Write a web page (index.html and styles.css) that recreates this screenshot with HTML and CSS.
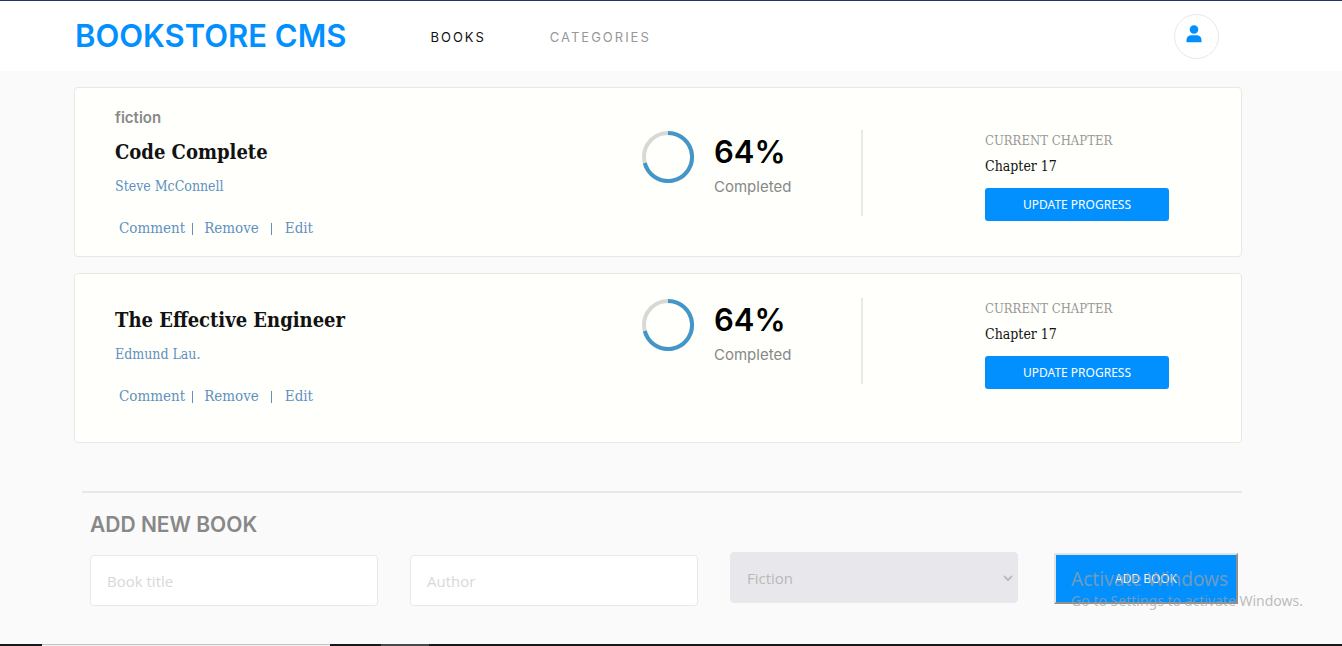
FILE: index.html
```html
<!DOCTYPE html>
<html lang="en">
<head>
  <meta charset="utf-8">
  <meta name="viewport" content="width=device-width, initial-scale=1">
  <title>Bookstore CMS</title>
  <link rel="stylesheet" href="styles.css">
</head>
<body class="page">
  <header class="header">
    <h1 class="brand">BOOKSTORE CMS</h1>
    <nav class="nav">
      <a class="nav-link nav-link-active" href="#books">BOOKS</a>
      <a class="nav-link" href="#categories">CATEGORIES</a>
    </nav>
    <button class="profile" type="button" aria-label="Profile">
      <svg class="profile-icon" viewBox="0 0 16 18" aria-hidden="true">
        <circle cx="8" cy="4.5" r="4.3"/>
        <path d="M0.5 17.3v-2.3a4.8 4.8 0 0 1 4.8-4.8h5.4a4.8 4.8 0 0 1 4.8 4.8v2.3z"/>
      </svg>
    </button>
  </header>

  <main class="main" id="books">
    <article class="card">
      <p class="category">fiction</p>
      <div class="card-row">
        <section class="book">
          <h2 class="title">Code Complete</h2>
          <a class="author" href="#author">Steve McConnell</a>
          <div class="actions">
            <button class="action action-comment" type="button">Comment</button>
            <button class="action action-remove" type="button">Remove</button>
            <button class="action action-edit" type="button">Edit</button>
          </div>
        </section>
        <section class="progress">
          <svg class="ring" viewBox="0 0 52 52" aria-hidden="true">
            <circle class="ring-track" cx="26" cy="26" r="24"/>
            <path class="ring-value" d="M26 2A24 24 0 1 1 2.8 32"/>
          </svg>
          <div class="progress-text">
            <p class="percent">64%</p>
            <p class="completed">Completed</p>
          </div>
        </section>
        <section class="chapter">
          <p class="chapter-label">CURRENT CHAPTER</p>
          <p class="chapter-name">Chapter 17</p>
          <button class="update" type="button">UPDATE PROGRESS</button>
        </section>
      </div>
    </article>

    <article class="card">
      <div class="card-row">
        <section class="book">
          <h2 class="title">The Effective Engineer</h2>
          <a class="author" href="#author">Edmund Lau.</a>
          <div class="actions">
            <button class="action action-comment" type="button">Comment</button>
            <button class="action action-remove" type="button">Remove</button>
            <button class="action action-edit" type="button">Edit</button>
          </div>
        </section>
        <section class="progress">
          <svg class="ring" viewBox="0 0 52 52" aria-hidden="true">
            <circle class="ring-track" cx="26" cy="26" r="24"/>
            <path class="ring-value" d="M26 2A24 24 0 1 1 2.8 32"/>
          </svg>
          <div class="progress-text">
            <p class="percent">64%</p>
            <p class="completed">Completed</p>
          </div>
        </section>
        <section class="chapter">
          <p class="chapter-label">CURRENT CHAPTER</p>
          <p class="chapter-name">Chapter 17</p>
          <button class="update" type="button">UPDATE PROGRESS</button>
        </section>
      </div>
    </article>

    <section class="add">
      <h2 class="add-title">ADD NEW BOOK</h2>
      <form class="form">
        <input class="field" type="text" placeholder="Book title" aria-label="Book title">
        <input class="field" type="text" placeholder="Author" aria-label="Author">
        <div class="select-wrap">
          <select class="select" aria-label="Category">
            <option>Fiction</option>
          </select>
          <svg class="chevron" viewBox="0 0 10 6" aria-hidden="true"><path d="M1 1l4 4 4-4"/></svg>
        </div>
        <button class="submit" type="button">ADD BOOK</button>
      </form>
    </section>
  </main>

  <aside class="watermark">
    <p class="watermark-title">Activate Windows</p>
    <p class="watermark-text">Go to Settings to activate Windows.</p>
  </aside>
  <footer class="taskbar">
    <span class="task-search"></span>
    <span class="task-active"></span>
  </footer>
</body>
</html>
```

FILE: styles.css
```css
* {
  box-sizing: border-box;
}

h1,
h2,
p {
  margin: 0;
}

button,
input,
select {
  margin: 0;
}

a {
  text-decoration: none;
}

.page {
  position: relative;
  display: flex;
  flex-direction: column;
  min-height: 100vh;
  margin: 0;
  background: #fafafa;
  color: #121212;
  font-family: Inter, "Open Sans", sans-serif;
}

.header {
  display: flex;
  align-items: center;
  height: 71px;
  padding: 0 123px 0 75px;
  border-top: 1px solid #1f3763;
  background: #fff;
}

.brand {
  color: #0290ff;
  font-size: 31px;
  font-weight: 600;
  line-height: 38px;
}

.nav {
  display: flex;
  gap: 64px;
  margin: 2px auto 0 84px;
}

.nav-link {
  color: #989898;
  font-size: 13px;
  letter-spacing: 2px;
  line-height: 16px;
}

.nav-link-active {
  color: #121212;
}

.profile {
  display: flex;
  justify-content: center;
  width: 45px;
  height: 45px;
  padding: 10px 5px 0 0;
  border: 1px solid #e8e8e8;
  border-radius: 50%;
  background: #fff;
}

.profile-icon {
  width: 16px;
  height: 18px;
  fill: #0290ff;
}

.main {
  display: flex;
  flex-direction: column;
  gap: 16px;
  padding: 16px 100px 38px 74px;
}

.card {
  min-height: 170px;
  padding: 21px 72px 17px 40px;
  border: 1px solid #e8e8e8;
  border-radius: 4px;
  background: #fffffb;
}

.category {
  color: #888;
  font-size: 15px;
  font-weight: 600;
  line-height: 18px;
}

.card-row {
  display: grid;
  grid-template-columns: 1fr 219px 308px;
}

.book {
  display: flex;
  flex-direction: column;
  align-items: flex-start;
  padding-top: 9px;
  font-family: "DejaVu Serif Condensed", "DejaVu Serif", serif;
}

.title {
  font-size: 20px;
  font-weight: 700;
  line-height: 32px;
}

.author {
  margin-top: 8px;
  color: #6091bf;
  font-size: 14px;
  line-height: 20px;
}

.actions {
  display: flex;
  margin-top: 22px;
}

.action {
  padding: 0;
  border: 0;
  background: none;
  color: #6091bf;
  font-family: inherit;
  font-size: 15px;
  line-height: 20px;
  text-align: left;
}

.action-comment {
  padding: 0 7px 0 4px;
}

.action-remove::before,
.action-edit::before {
  content: "";
  display: inline-block;
  width: 1px;
  height: 12px;
  margin-right: 11px;
  background: #6091bf;
  vertical-align: -2px;
}

.action-remove {
  padding-right: 12px;
}

.action-edit::before {
  margin-right: 13px;
}

.progress {
  display: flex;
  gap: 20px;
  padding-top: 4px;
}

.ring {
  width: 52px;
  height: 52px;
}

.ring-track,
.ring-value {
  fill: none;
  stroke: #d8d8d6;
  stroke-width: 4;
}

.ring-value {
  stroke: #4296ca;
}

.percent {
  color: #000;
  font-size: 31px;
  font-weight: 600;
  line-height: 42px;
}

.completed {
  margin-top: 4px;
  color: #888;
  font-size: 15px;
  line-height: 20px;
}

.chapter {
  align-self: start;
  height: 86px;
  margin-top: 3px;
  padding-left: 122px;
  border-left: 2px solid #e8e8e8;
  font-family: "DejaVu Serif Condensed", "DejaVu Serif", serif;
}

.chapter-label {
  color: #989898;
  font-size: 13px;
  line-height: 22px;
  white-space: nowrap;
}

.chapter-name {
  margin-top: 4px;
  font-size: 14px;
  line-height: 20px;
}

.update {
  width: 100%;
  height: 33px;
  margin-top: 12px;
  padding: 0;
  border: 0;
  border-radius: 3px;
  background: #0290ff;
  color: #fff;
  font-family: "Noto Sans", "Open Sans", sans-serif;
  font-size: 12px;
}

.add {
  margin: 32px 0 0 8px;
  padding: 20px 4px 0 8px;
  border-top: 2px solid #e8e8e8;
}

.add-title {
  color: #888;
  font-size: 21px;
  font-weight: 600;
  line-height: 24px;
}

.form {
  display: grid;
  grid-template-columns: 1fr 1fr 1fr 188px;
  gap: 32px;
  align-items: start;
  margin-top: 15px;
}

.field,
.select {
  width: 100%;
  height: 51px;
  padding: 0 16px;
  border: 1px solid #e8e8e8;
  border-radius: 4px;
  background: #fff;
  font-family: "Open Sans", sans-serif;
  font-size: 15px;
}

.field {
  margin-top: 3px;
}

.field::placeholder {
  color: #d8d8d8;
  opacity: 1;
}

.select-wrap {
  position: relative;
}

.select {
  border-color: #e8e8ec;
  background: #e8e8ec;
  color: #b8b8b8;
  appearance: none;
}

.chevron {
  position: absolute;
  top: 23px;
  right: 5px;
  width: 10px;
  height: 6px;
  fill: none;
  stroke: #bcbcbf;
  stroke-width: 2;
  pointer-events: none;
}

.submit {
  height: 51px;
  margin: 1px 0 0 4px;
  padding: 0;
  border: 2px outset #e3e3e3;
  background: #0290ff;
  color: #fff;
  font-family: "Open Sans", sans-serif;
  font-size: 12px;
}

.watermark {
  position: absolute;
  right: 39px;
  bottom: 35px;
  color: rgba(160, 160, 160, 0.7);
  font-family: "Noto Sans", "Open Sans", sans-serif;
  pointer-events: none;
}

.watermark-title {
  font-size: 19px;
  line-height: 24px;
}

.watermark-text {
  font-size: 14px;
  line-height: 20px;
}

.taskbar {
  display: flex;
  gap: 51px;
  height: 2px;
  margin-top: auto;
  padding-left: 42px;
  background: #17181c;
}

.task-search {
  width: 288px;
  border-top: 1px solid #c4c4c4;
  background: #f2f2f2;
}

.task-active {
  width: 48px;
  background: #48494c;
}
```
